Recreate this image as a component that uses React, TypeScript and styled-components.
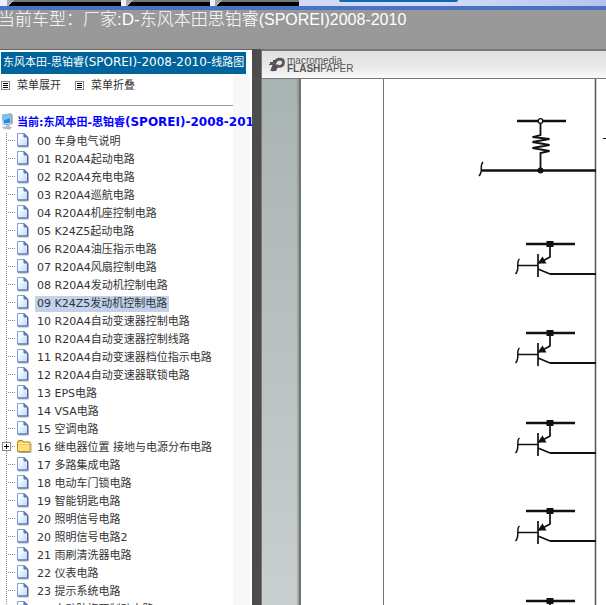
import React from 'react';
import styled, { createGlobalStyle } from 'styled-components';

const GlobalStyle = createGlobalStyle`
  * { box-sizing: border-box; }
  html, body { margin: 0; height: 100%; overflow: hidden; background: #999; }
  #root { height: 100%; }
  body { font-family: 'DejaVu Sans', 'Noto Sans CJK SC', sans-serif; font-size: 11px; color: #333; }
  button { font: inherit; color: inherit; background: none; border: 0; padding: 0; cursor: pointer; }
`;

const Page = styled.div`
  height: 100vh;
  display: flex;
  flex-direction: column;
`;

const TabStrip = styled.nav`
  display: flex;
  flex: none;
  height: 10px;
  background: linear-gradient(90deg, #c2cef0, #d5def8 70%, #b5c5ee);
  border-bottom: 4px solid #4a72c4;
`;

const Tab = styled.button<{ $width: number }>`
  flex: none;
  width: ${({ $width }) => $width}px;
  height: 6px;
  margin-right: 5px;
  background: linear-gradient(135deg, #aaa 5px, transparent 5px), linear-gradient(#777 2px, #000 2px);
`;

const TabGroup = styled.div`
  display: flex;
  width: 299px;
  padding-left: 7px;
  background: #eef1fb;
  overflow: hidden;
`;

const ActiveTab = styled.button`
  width: 119px;
  height: 2px;
  margin-left: 40px;
  background: #1668ac;
  border-radius: 0 0 2px 2px;
`;

const Banner = styled.header`
  flex: none;
  height: 39px;
  overflow: hidden;
  background: #999;
`;

const BannerText = styled.h1`
  margin: 0 0 0 -2px;
  font: 300 17px/19px 'Liberation Sans', 'Noto Sans CJK SC', sans-serif;
  color: #fff;
  white-space: nowrap;
`;

const Model = styled.span`
  font-size: 16px;
`;

const Frames = styled.div`
  flex: 1;
  min-height: 0;
  display: grid;
  grid-template-columns: 252px 9px minmax(0, 1fr);
`;

const Sidebar = styled.aside`
  display: flex;
  flex-direction: column;
  border-top: 1px solid #666;
  background: #fff;
  overflow: hidden;
  white-space: nowrap;
`;

const Divider = styled.div`
  background: #4d4d4d;
`;

const Caption = styled.h2`
  flex: none;
  align-self: flex-start;
  margin: 2px 0 0 1px;
  padding: 0 2px;
  height: 22px;
  font-size: 11px;
  font-weight: 400;
  line-height: 20px;
  color: #fff;
  background: #00639c;
`;

const Latin = styled.span`
  font-size: 12px;
`;

const SidebarBody = styled.div`
  flex: 1;
  background: linear-gradient(90deg, #fff 233px, #f8f8f8 233px, #f8f8f8 250px, #fff 250px);
`;

const MenuActions = styled.div`
  display: flex;
  gap: 14px;
  width: 233px;
  height: 32px;
  padding: 0 0 8px 1px;
  border-bottom: 1px solid #999;
`;

const MenuAction = styled.button`
  display: flex;
  align-items: center;
  gap: 7px;
  line-height: 16px;
`;

const Tree = styled.ul`
  list-style: none;
  margin: 0;
  padding: 7px 0 0;
`;

const RootRow = styled.li`
  display: flex;
  align-items: flex-start;
  gap: 4px;
  height: 20px;
  padding-left: 1px;
  line-height: 18px;
  color: #00f;
  font-weight: 700;
`;

const Row = styled.li`
  display: flex;
  align-items: center;
  height: 18px;
`;

const NodeLink = styled.a<{ $selected: boolean }>`
  margin-left: 3px;
  padding: 0 2px;
  line-height: 16px;
  color: #333;
  text-decoration: none;
  background: ${({ $selected }) => ($selected ? '#c0d2ec' : 'transparent')};
`;

const RootLink = styled.a`
  color: inherit;
  text-decoration: none;
`;

const Viewer = styled.main`
  display: flex;
  flex-direction: column;
  min-width: 0;
  border-top: 2px solid #777;
  border-left: 1px solid #777;
`;

const ViewerBar = styled.div`
  flex: none;
  display: flex;
  align-items: center;
  gap: 2px;
  height: 28px;
  padding-left: 7px;
  background: linear-gradient(#e1e1e1, #e8e8e8 60%, #fafafa);
  border-bottom: 1px solid #777;
`;

const Brand = styled.div`
  font: 10px/8px 'Liberation Sans', sans-serif;
  color: #555;
`;

const BrandLine = styled.div`
  white-space: nowrap;
`;

const Desk = styled.div`
  flex: 1;
  min-height: 0;
  display: flex;
  padding-left: 37px;
  background: linear-gradient(#a9b3b2, #c9d0cf);
  overflow: hidden;
`;

const Paper = styled.div`
  flex: 1;
  min-width: 0;
  overflow: hidden;
  background: #fff;
  border-left: 2px solid #6e7676;
  box-shadow: -1px 0 2px #7f8989;
`;

const Drawing = styled.svg`
  display: block;
`;

const Icon = styled.svg`
  display: block;
  flex: none;
`;

function ListIcon() {
  return (
    <Icon width="9" height="9" viewBox="0 0 9 9" shapeRendering="crispEdges" aria-hidden="true">
      <path d="M.5.5h8v8h-8z" fill="#fff" stroke="#888" />
      <path d="M2 2.5h5M2 4.5h5M2 6.5h5" stroke="#000" />
    </Icon>
  );
}

function ComputerIcon() {
  return (
    <Icon width="12" height="18" viewBox="0 0 12 18" aria-hidden="true">
      <path d="M1 2 9.500.5l.8 10.500-8 .8z" fill="#d8e5ee" stroke="#7d9bb2" strokeWidth=".7" />
      <path d="m2.200 2.800 6.500-1.200.6 8.200-6.200.7z" fill="#238ae2" />
      <path d="m2.300 2.900 6.400-1.200.2 3.500-6.200 2z" fill="#76caf8" />
      <path d="m10 .5 1.500 1.300.2 9.200-1.500.5z" fill="#849eac" />
      <path d="m5.500 11.700 2.500-.3.500 2.600 2 .5-1.500 1.600-6-.5-1.500-1.100 4-.8z" fill="#b7c4cf" stroke="#8096a8" strokeWidth=".5" />
    </Icon>
  );
}

function Branch({ expandable }: { expandable: boolean }) {
  return (
    <Icon width="16" height="18" viewBox="0 0 16 18" shapeRendering="crispEdges" aria-hidden="true">
      <path d="M6.5 0v18M8 7.5h8" stroke="#888" strokeDasharray="1 1" fill="none" />
      {expandable && (
        <>
          <path d="M2.5 3.5h8v8h-8z" fill="#fff" stroke="#888" />
          <path d="M4 7.5h5M6.5 5v5" stroke="#000" />
        </>
      )}
    </Icon>
  );
}

function DocumentIcon() {
  return (
    <Icon width="16" height="18" viewBox="0 0 16 18" aria-hidden="true">
      <defs>
        <linearGradient id="sheet" x1="0" y1="0" x2="1" y2="1">
          <stop offset=".2" stopColor="#fff" />
          <stop offset="1" stopColor="#bcd7fa" />
        </linearGradient>
      </defs>
      <path d="M2.500 14h10V4.500" fill="none" stroke="#b0b0b0" />
      <path d="M1.500.5h6.500l3.500 3.500v9h-10z" fill="url(#sheet)" stroke="#7f9fd4" />
      <path d="M11.500 4v9h-10" fill="none" stroke="#4a68a8" />
      <path d="M8 .5V4h3.500z" fill="#6385c4" stroke="#5271b2" />
    </Icon>
  );
}

function FolderIcon() {
  return (
    <Icon width="16" height="18" viewBox="0 0 16 18" aria-hidden="true">
      <path d="M2.500 13.500h12.500V4" fill="none" stroke="#aaa" />
      <path d="M1.500 12.500v-9.500l1-1.500h4l1.500 1.500h6v9.500z" fill="#f5cb4d" stroke="#bd8b1c" />
      <path d="M2 6h11.500v6H2z" fill="#fbe180" />
      <path d="M2 4.500h11.500" stroke="#fff3b4" />
    </Icon>
  );
}

function PaperLogo() {
  return (
    <Icon width="16" height="15" viewBox="0 0 16 15" aria-hidden="true">
      <path d="M2.500 14 6 5.800C6.800 3.300 8 2.200 10.500 2.200c2.800 0 4 1.300 4 3.100C14.500 8.200 12.300 9.500 9.300 9.500H7.500" fill="none" stroke="#555" strokeWidth="2.700" />
      <path d="m5.500 7.500h4L7.200 14H2.800z" fill="#555" />
      <path d="M1 5h3v3H1zM4 3h2v3H4zM0 7h1v1H0z" fill="#555" />
      <path d="M7.500 6.500 10.500 5" stroke="#e6e6e6" />
    </Icon>
  );
}

function Transistor({ y }: { y: number }) {
  return (
    <g transform={`translate(0 ${y})`} stroke="#111" fill="none">
      <path d="M225 0h49" strokeWidth="2.500" />
      <path d="M245.500-3h7v6h-7z" fill="#111" stroke="none" />
      <path d="M249 0v13l-11 6M217 21.500h20M237 10v23M237 25l12 5" strokeWidth="1.700" />
      <path d="m236.500 19.500 5-7 4 7z" fill="#111" stroke="none" />
      <path d="M249 30h46" strokeWidth="2.200" />
      <path d="M218.500 15c-3 2-1 8-2 11-.5 2-1 3-2 4" strokeWidth="1.500" />
    </g>
  );
}

function Circuit() {
  return (
    <Drawing width="305" height="527" viewBox="0 0 305 527" role="img" aria-label="K24Z5">
      <path d="M82.500 0v527" stroke="#777" />
      <path d="M294.500 0v527" stroke="#555" strokeWidth="1.500" />
      <path d="M302 59.500h3" stroke="#111" />
      <g stroke="#111" fill="none">
        <path d="M216 42h49M181 91.500h114" strokeWidth="2.300" />
        <path d="M239.500 43v13l-8 2 17 2-17 3 17 3-17 3 17 3-9 2v19" strokeWidth="1.800" />
        <path d="M182 83c-3 3-1 7-2 10-.5 2-1 3-2 4" strokeWidth="1.500" />
        <circle cx="239.500" cy="42" r="2.300" fill="#fff" strokeWidth="1.300" />
        <circle cx="239.500" cy="91.500" r="3" fill="#111" stroke="none" />
      </g>
      {[165, 254, 344, 432, 522].map((y) => (
        <Transistor key={y} y={y} />
      ))}
    </Drawing>
  );
}

const nodes: string[] = [
  '00 车身电气说明',
  '01 R20A4起动电路',
  '02 R20A4充电电路',
  '03 R20A4巡航电路',
  '04 R20A4机座控制电路',
  '05 K24Z5起动电路',
  '06 R20A4油压指示电路',
  '07 R20A4风扇控制电路',
  '08 R20A4发动机控制电路',
  '09 K24Z5发动机控制电路',
  '10 R20A4自动变速器控制电路',
  '10 R20A4自动变速器控制线路',
  '11 R20A4自动变速器档位指示电路',
  '12 R20A4自动变速器联锁电路',
  '13 EPS电路',
  '14 VSA电路',
  '15 空调电路',
  '16 继电器位置 接地与电源分布电路',
  '17 多路集成电路',
  '18 电动车门锁电路',
  '19 智能钥匙电路',
  '20 照明信号电路',
  '20 照明信号电路2',
  '21 雨刷清洗器电路',
  '22 仪表电路',
  '23 提示系统电路',
  '24 自动防抱死制动电路',
];

const SELECTED = 9;
const FOLDER = 17;

export default function App() {
  return (
    <>
      <GlobalStyle />
      <Page>
        <TabStrip>
          <TabGroup>
            <Tab $width={114} aria-label="1" />
            <Tab $width={84} aria-label="2" />
            <Tab $width={84} aria-label="3" />
          </TabGroup>
          <ActiveTab aria-label="4" />
        </TabStrip>
        <Banner>
          <BannerText>
            当前车型：厂家:D-东风本田思铂睿<Model>(SPOREI)2008-2010</Model>
          </BannerText>
        </Banner>
        <Frames>
          <Sidebar>
            <Caption>
              东风本田-思铂睿<Latin>(SPOREI)-2008-2010-</Latin>线路图
            </Caption>
            <SidebarBody>
              <MenuActions>
                <MenuAction><ListIcon />菜单展开</MenuAction>
                <MenuAction><ListIcon />菜单折叠</MenuAction>
              </MenuActions>
              <Tree>
                <RootRow>
                  <ComputerIcon />
                  <RootLink href="#root">
                    当前:东风本田-思铂睿<Latin>(SPOREI)-2008-2010</Latin>
                  </RootLink>
                </RootRow>
                {nodes.map((label, index) => (
                  <Row key={label}>
                    <Branch expandable={index === FOLDER} />
                    {index === FOLDER ? <FolderIcon /> : <DocumentIcon />}
                    <NodeLink href={`#node-${index}`} $selected={index === SELECTED}>{label}</NodeLink>
                  </Row>
                ))}
              </Tree>
            </SidebarBody>
          </Sidebar>
          <Divider />
          <Viewer>
            <ViewerBar>
              <PaperLogo />
              <Brand>
                <BrandLine>macromedia</BrandLine>
                <BrandLine><b>FLASH</b>PAPER</BrandLine>
              </Brand>
            </ViewerBar>
            <Desk>
              <Paper>
                <Circuit />
              </Paper>
            </Desk>
          </Viewer>
        </Frames>
      </Page>
    </>
  );
}
